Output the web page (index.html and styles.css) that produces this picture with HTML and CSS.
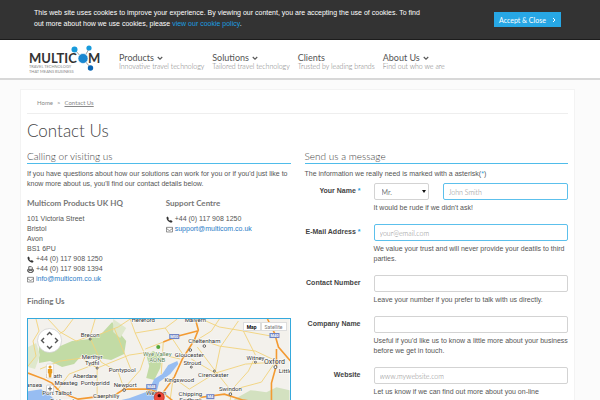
FILE: index.html
```html
<!DOCTYPE html>
<html lang="en">
<head>
<meta charset="utf-8">
<meta name="viewport" content="width=device-width, initial-scale=1">
<title>Contact Us - Multicom</title>
<link rel="stylesheet" href="styles.css">
</head>
<body>
<svg class="symbols" aria-hidden="true">
  <symbol id="phone" viewBox="0 0 12 12"><path fill="#333" d="M1 2.200 2.800.8 5 3.700 3.800 5c.6 1.300 1.600 2.300 3 3.100L8.200 7l3 2-.9 2C6 12.600.2 7 1 2.200Z"/></symbol>
  <symbol id="printer" viewBox="0 0 12 12"><path fill="none" stroke="#333" stroke-width="1.300" d="M3 6V1.200h4.500L9 2.700V6M3 9H.8V7q0-1.200 1.200-1.200h8q1.200 0 1.200 1.200v2H9M3 7.800h6v3.400H3Z"/></symbol>
  <symbol id="mail" viewBox="0 0 13 12"><path fill="none" stroke="#555" stroke-width="1.200" d="M.8 2h11.400v8.600H.8ZM.8 4l4.700 3.500q1 .7 2 0L12.200 4"/></symbol>
  <symbol id="chevron" viewBox="0 0 8 6"><path fill="none" stroke="#555" stroke-width="1.500" d="m1 1 3 3 3-3"/></symbol>
</svg>

<aside class="cookies">
  <p class="cookie-text">This web site uses cookies to improve your experience. By viewing our content, you are accepting the use of cookies. To find out more about how we use cookies, please <a href="#">view our cookie policy</a>.</p>
  <button class="accept" type="button">Accept &amp; Close
    <svg viewBox="0 0 4 6" aria-hidden="true"><path fill="none" stroke="#fff" d="m1 1 2 2-2 2"/></svg>
  </button>
</aside>

<header class="site-header">
  <a class="logo" href="#" aria-label="Multicom">
    <svg viewBox="0 0 72 30">
      <path fill="none" stroke="#888" stroke-width=".8" d="m46 6 8 9 6-10M54 15l8 9"/>
      <text class="logo-name" x="0" y="19">MULTIC</text>
      <text class="logo-name" x="59" y="19">M</text>
      <text class="logo-tag" x="0" y="24">TRAVEL TECHNOLOGY</text>
      <text class="logo-tag" x="0" y="29">THAT MEANS BUSINESS</text>
      <circle cx="45.500" cy="5.500" r="3" fill="#189bdc"/>
      <circle cx="60" cy="4" r="2.600" fill="#189bdc"/>
      <circle cx="54" cy="14.500" r="5" fill="#1a87d0" stroke="#fff" stroke-width=".6"/>
      <circle cx="61.500" cy="24" r="2.700" fill="#0965b4"/>
    </svg>
  </a>
  <nav class="nav">
    <a href="#"><span class="nav-title">Products <svg><use href="#chevron"/></svg></span><span class="nav-sub">Innovative travel technology</span></a>
    <a href="#"><span class="nav-title">Solutions <svg><use href="#chevron"/></svg></span><span class="nav-sub">Tailored travel technology</span></a>
    <a href="#"><span class="nav-title">Clients</span><span class="nav-sub">Trusted by leading brands</span></a>
    <a href="#"><span class="nav-title">About Us <svg><use href="#chevron"/></svg></span><span class="nav-sub">Find out who we are</span></a>
  </nav>
</header>

<main class="card">
  <nav class="crumbs" aria-label="Breadcrumb"><a href="#">Home</a><span class="crumb-arrow">&gt;</span><a class="current" href="#">Contact Us</a></nav>
  <h1>Contact Us</h1>
  <div class="columns">
    <section>
      <h2>Calling or visiting us</h2>
      <p>If you have questions about how our solutions can work for you or if you'd just like to know more about us, you'll find our contact details below.</p>
      <div class="offices">
        <div>
          <h3>Multicom Products UK HQ</h3>
          <address>101 Victoria Street<br>Bristol<br>Avon<br>BS1 6PU<br>
            <svg><use href="#phone"/></svg> +44 (0) 117 908 1250<br>
            <svg><use href="#printer"/></svg> +44 (0) 117 908 1394<br>
            <svg><use href="#mail"/></svg> <a href="#">info@multicom.co.uk</a></address>
        </div>
        <div>
          <h3>Support Centre</h3>
          <address><svg><use href="#phone"/></svg> +44 (0) 117 908 1250<br>
            <svg><use href="#mail"/></svg> <a href="#">support@multicom.co.uk</a></address>
        </div>
      </div>
      <h3 class="finding">Finding Us</h3>
      <div class="map">
        <svg viewBox="0 0 261 110" role="img" aria-label="Map of the Bristol area">
          <rect width="261" height="110" fill="#f3f1ec"/>
          <g fill="#c2dba5">
            <path d="m11 27 19 1 14-6 18-2 12-6 10-11 5 8 9 11-2 13-13 6-12-2-17-3-8 9-12 3-12-6-11 2Z"/>
            <path d="m118 36 7-4 9 5-2 12-6 12-8-2 3-12Z"/>
            <path fill="#dfe8cc" d="m85 0 13 9-6 10-7-6ZM0 28l8-4 4 12-5 14-7-2Z"/>
            <path fill="#d3e1c0" d="m206 80 16-9 16 2 10-5 13 3v39h-65Z"/>
          </g>
          <g fill="#97bdf2">
            <path d="m0 72 13-2 8 5 8 8 4 27H0Z"/>
            <path d="m149 42-9 4-6 9-8 5-6 12-19 7-18 4-13 27h44l8-22 6-14 3-11 11-8 8-10Z"/>
          </g>
          <g fill="none" stroke="#f2d27a" stroke-width=".9">
            <path d="m8 0 3 12-6 10 3 15-8 10M20 0l12 13 16 9 14-5 5-17M62 19l11 24 17 10 6 17M62 19 90 8l12-8M12 50l20-8 22-3 15 10M69 49v28M54 39l15 10 32-13 20-3M30 70l11-15 26-10M86 9l8 20 9 22M45 0 36 12l-18 10"/>
            <path d="m102 0 5 14 10 22-5 15-16 18M107 14l30-5 12-9M117 30l18-7M135 23l-2 32M137 9l10 15 10 15M152 40l-17-4M170 20l21 7 36 5 21 10M169 28l18 24 16 20M191 0l-8 12-16 10M187 54l-24-14M187 54l30-9 31-2M203 71l17-19 7-15M203 71l30-8 13-19M210 2l-18 26-5 24M173 0l18 8 24 4 33 6M215 12l12 24M147 60l14 10 26-16M145 58l-3 22"/>
            <path d="m203 72-5 38M163 88l-10 22M240 82l22 8M150 88l-30 12"/>
          </g>
          <g fill="none" stroke="#f39a32" stroke-width="1.600">
            <path d="m0 54 16 6 8 4 8 9 18 7 16-2 19-1 11-7h22l17 4 15 12 15 1 8-9 23-3 19 6 25 4 22-1"/>
            <path d="m167 0 3 11-4 10-12 19-8 18-13 18-8 30M135 23l15-6 19-5M239 0l7 14 4 14 12 14M248 30v16l-5 18v22"/>
          </g>
          <g fill="#6f83c5"><rect x="141" y="15" width="10" height="5"/><rect x="241" y="14" width="10" height="5"/><rect x="118" y="65" width="10" height="5"/><rect x="178" y="75" width="8" height="5"/></g>
          <g class="road-no"><text x="146" y="19">M50</text><text x="246" y="18">M40</text><text x="123" y="69">M48</text><text x="182" y="79">M4</text></g>
          <g fill="#fff" stroke="#444" stroke-width=".8"><circle cx="62" cy="20" r="1"/><circle cx="69" cy="49" r="1"/><circle cx="162" cy="31" r="1.300"/><circle cx="176" cy="27" r="1.300"/><circle cx="163" cy="48" r="1"/><circle cx="186" cy="52" r="1"/><circle cx="202" cy="75" r="1.300"/><circle cx="227" cy="43" r="1"/><circle cx="247" cy="48" r="1.500"/><circle cx="96" cy="71" r="1.300"/></g>
          <circle cx="130" cy="28" r="2" fill="#55a83b"/>
          <g class="place">
            <text x="62" y="18">Brecon</text><text x="64" y="40">Merthyr</text><text x="64" y="46">Tydfil</text>
            <text x="94" y="53">Pontypool</text><text x="57" y="59">Aberdare</text><text x="26" y="59">Neath</text>
            <text x="38" y="66">Maesteg</text><text x="67" y="66">Pontypridd</text><text x="97" y="68">Newport</text>
            <text x="78" y="79">Caerphilly</text><text x="29" y="76">Port Talbot</text><text x="34" y="84">Bridgend</text>
            <text x="2" y="68">Swansea</text><text class="soft" x="129" y="37">Wye Valley</text><text class="soft" x="129" y="43">AONB</text>
            <text x="115" y="3">Hereford</text><text x="167" y="3">Malvern</text><text x="176" y="24">Cheltenham</text>
            <text x="161" y="38">Gloucester</text><text x="164" y="46">Stroud</text><text x="185" y="58">Cirencester</text>
            <text x="151" y="63">Kingswood</text><text x="162" y="77">Chipping</text><text x="162" y="83">Sodbury</text>
            <text x="202" y="72">Swindon</text><text x="227" y="41">Witney</text><text class="big" x="246" y="45">Oxford</text>
            <text x="257" y="54">Little</text><text x="128" y="76">Weston</text>
          </g>
          <path d="M131 92c0-8-5-9-5-14a5 5 0 0 1 10 0c0 5-5 6-5 14Z" fill="#ef4a3c" stroke="#b5271d" stroke-width=".7"/><circle cx="131" cy="76.500" r="1.700" fill="#400"/>
          <circle cx="21.500" cy="21.500" r="12" fill="#fff" stroke="#ccc" stroke-width=".7"/>
          <path fill="none" stroke="#555" stroke-width="1.400" d="m19 16 2.500-2.500L24 16M19 27l2.500 2.500L24 27M16 19l-2.500 2.500L16 24M27 19l2.500 2.500L27 24"/>
          <rect x="18.500" y="45" width="7" height="14" rx="1" fill="#fff" stroke="#ccc" stroke-width=".6"/>
          <circle cx="22" cy="48" r="1.600" fill="#e79b20"/><path fill="#e79b20" d="M19.800 50h4.400v4l-.7.500-.3 4h-2.400l-.3-4-.7-.5Z"/>
          <rect x="18.500" y="66" width="7" height="7" rx="1" fill="#fff" stroke="#bbb" stroke-width=".6"/><path stroke="#555" d="M20 69.500h4M22 67.500v4"/>
        </svg>
        <div class="map-types"><button class="on" type="button">Map</button><button type="button">Satellite</button></div>
      </div>
    </section>

    <section>
      <h2>Send us a message</h2>
      <p>The information we really need is marked with a asterisk(<span class="star">*</span>)</p>
      <form class="form">
        <div class="row">
          <label for="name">Your Name <span class="star">*</span></label>
          <div class="field">
            <div class="pair">
              <div class="select">
                <select aria-label="Title"><option>Mr.</option><option>Mrs.</option><option>Ms.</option></select>
              </div>
              <input class="required" id="name" type="text" placeholder="John Smith">
            </div>
            <p class="help">It would be rude if we didn't ask!</p>
          </div>
        </div>
        <div class="row">
          <label for="email">E-Mail Address <span class="star">*</span></label>
          <div class="field"><input class="required" id="email" type="email" placeholder="your@email.com"><p class="help">We value your trust and will never provide your deatils to third parties.</p></div>
        </div>
        <div class="row">
          <label for="phone-no">Contact Number</label>
          <div class="field"><input id="phone-no" type="tel"><p class="help">Leave your number if you prefer to talk with us directly.</p></div>
        </div>
        <div class="row">
          <label for="company">Company Name</label>
          <div class="field"><input id="company" type="text"><p class="help">Useful if you'd like us to know a little more about your business before we get in touch.</p></div>
        </div>
        <div class="row">
          <label for="website">Website</label>
          <div class="field"><input id="website" type="text" placeholder="www.mywebsite.com"><p class="help">Let us know if we can find out more about you on-line</p></div>
        </div>
      </form>
    </section>
  </div>
</main>
</body>
</html>
```
FILE: styles.css
```css
* { box-sizing: border-box; }
html { scrollbar-width: none; }
body {
  margin: 0;
  background: #fbfbfb;
  color: #555;
  font: 7px/10px "Liberation Sans", Arial, sans-serif;
}
p, h1, h2, h3 { margin: 0; }
a { color: #2a7cc7; text-decoration: none; }
.symbols { display: none; }

.cookies {
  display: flex;
  justify-content: space-between;
  align-items: flex-start;
  min-height: 40px;
  padding: 7px 39px 0 34px;
  background: #333;
  border-bottom: 1px solid #1c1c1c;
  color: #fff;
}
.cookie-text { flex: 0 1 394px; line-height: 11px; }
.cookies a { color: #1c9fe0; }
.accept {
  display: flex;
  align-items: center;
  justify-content: space-between;
  width: 67px;
  height: 15px;
  margin-top: 5px;
  padding: 0 5px;
  border: 0;
  background: #27a7e5;
  color: #fff;
  font: 7px Lato, sans-serif;
}
.accept svg { width: 4px; height: 6px; }

.site-header {
  display: flex;
  gap: 18px;
  height: 40px;
  padding: 4px 29px 0;
  background: #fff;
  border-bottom: 2px solid #d8d8d8;
}
.logo svg { display: block; width: 72px; height: 30px; }
.logo-name { font: 700 13px Lato, sans-serif; fill: #333; }
.logo-tag { font: 4px Lato, sans-serif; fill: #888; }
.nav { display: flex; gap: 8px; padding-top: 9px; }
.nav span { display: block; }
.nav-title { color: #555; font: 9px/9px Lato, sans-serif; }
.nav-title svg { width: 6px; height: 5px; margin-left: 1px; vertical-align: middle; }
.nav-sub { color: #777; font: 300 7px/8px Lato, sans-serif; }

.card {
  margin: 9px 25px 0 20px;
  padding: 5px 6px 20px;
  background: #fff;
  border: 1px solid #f3f3f3;
}
.crumbs {
  display: flex;
  gap: 4px;
  padding: 3px 10px 5px;
  border-bottom: 1px solid #eee;
  font: 6px/10px Lato, sans-serif;
}
.crumbs a, .crumb-arrow { color: #888; }
.crumbs .current { text-decoration: underline; }
h1 { margin: 6px 0 8px; color: #444; font: 300 17px/22px Lato, sans-serif; }
.columns { display: grid; grid-template-columns: 1fr 1fr; gap: 14px; }
h2 {
  margin-bottom: 5px;
  border-bottom: 1px solid #4fbcea;
  color: #444;
  font: 300 10px/13px Lato, sans-serif;
}
h3 { color: #777; font: 700 8px/10px Lato, sans-serif; }
.offices { display: grid; grid-template-columns: 1fr 1fr; gap: 14px; margin-top: 9px; }
address { margin-top: 6px; font-style: normal; }
address svg { width: 7px; height: 7px; vertical-align: middle; }
.finding { margin: 12px 0; }

.map { position: relative; border: 1px solid #35a9dd; }
.map > svg { display: block; width: 100%; }
.place { font: 6px Roboto, sans-serif; fill: #333; stroke: #fff; stroke-width: 1px; paint-order: stroke; text-anchor: middle; }
.place .big { font-size: 7px; }
.place .soft { fill: #59804f; }
.road-no { font: 700 4px Roboto, sans-serif; fill: #fff; text-anchor: middle; }
.map-types { position: absolute; top: 3px; right: 3px; display: flex; }
.map-types button {
  height: 9px;
  padding: 0 3px;
  border: 1px solid #ddd;
  background: #fff;
  color: #777;
  font: 5px Roboto, sans-serif;
}
.map-types .on { color: #111; font-weight: 700; }

.star { color: #2a9fe0; }
.form { margin-top: 4px; }
.row { display: grid; grid-template-columns: 56px 1fr; gap: 13px; margin-bottom: 11px; }
.row label { padding-top: 3px; color: #444; font-weight: 700; text-align: right; white-space: nowrap; }
.pair { display: grid; grid-template-columns: 55px 1fr; gap: 14px; }
.help { margin-top: 3px; }
input, select {
  display: block;
  width: 100%;
  min-width: 0;
  height: 17px;
  padding: 0 5px;
  border: 1px solid #d3d3d3;
  border-radius: 2px;
  background: #fff;
  color: #777;
  font: 7px Lato, sans-serif;
}
select { appearance: none; padding-left: 7px; }
.select { position: relative; }
.select::after {
  content: "";
  position: absolute;
  right: 3px;
  top: 7px;
  border: 2px solid transparent;
  border-top: 3px solid #111;
  border-bottom: 0;
  pointer-events: none;
}
input.required { border-color: #5cc0ec; }
::placeholder { color: #888; font-weight: 300; opacity: 1; }
```
